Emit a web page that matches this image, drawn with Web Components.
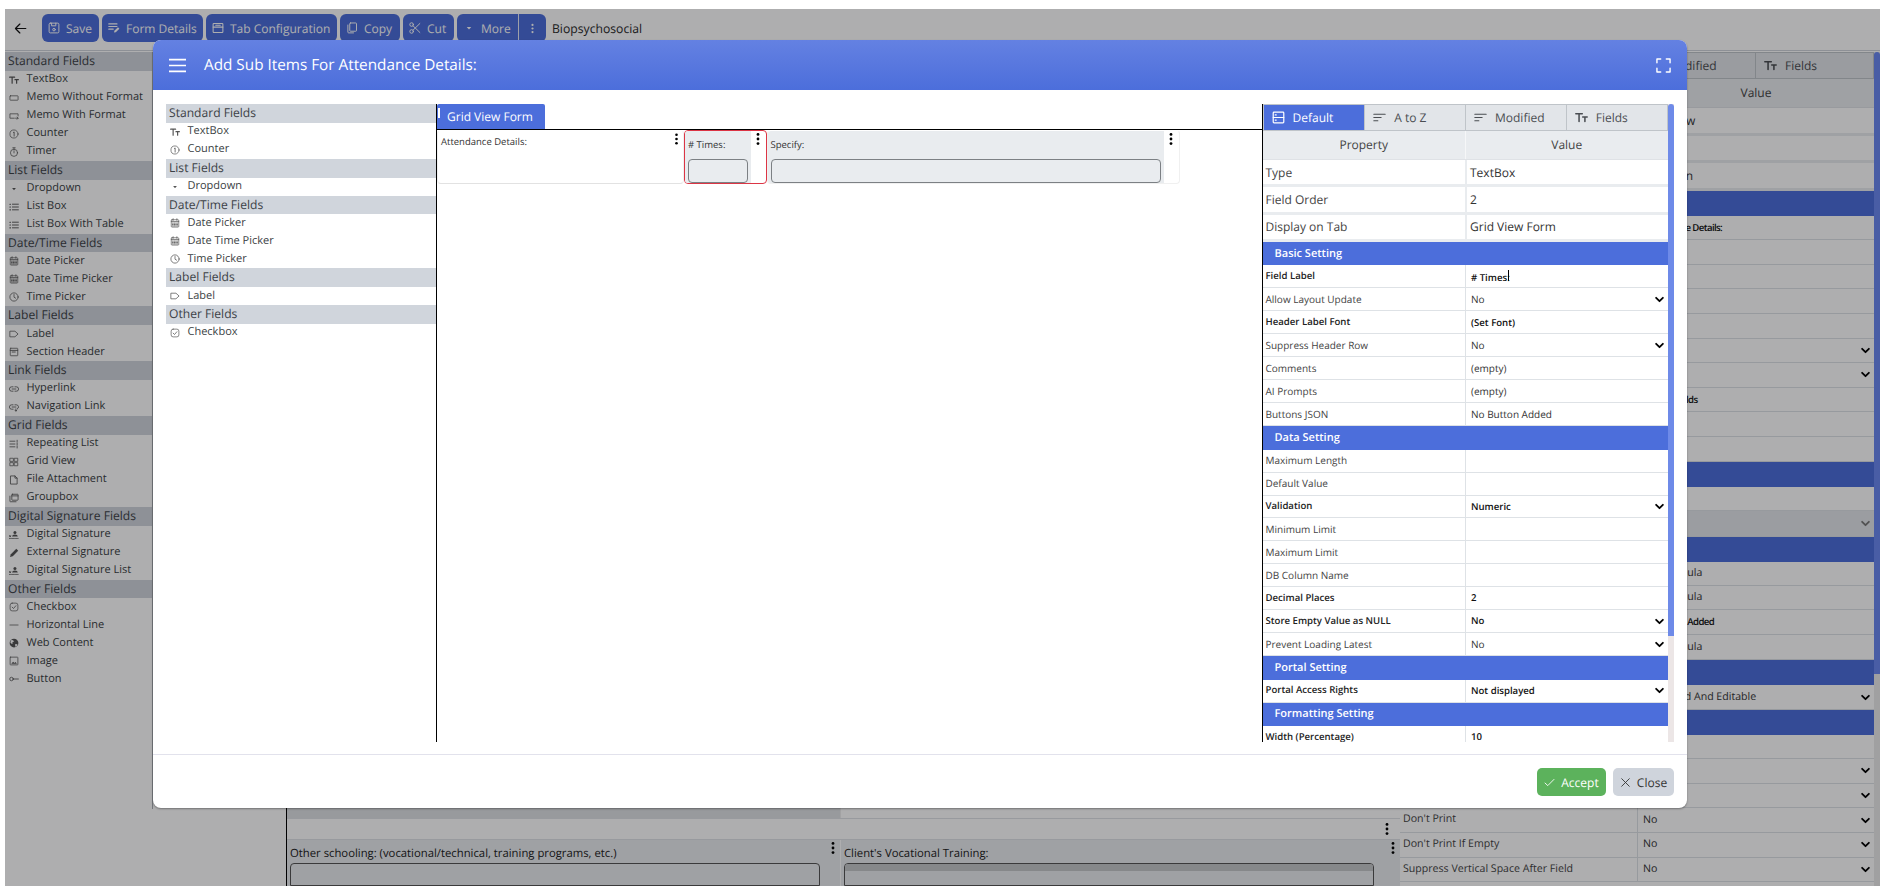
<!DOCTYPE html>
<html lang="en"><head><meta charset="utf-8"><title>Form Designer</title>
<style>
html,body{margin:0;padding:0;height:100%;overflow:hidden;background:#fff}
body{font-family:"Open Sans","Noto Sans",sans-serif;color:#333;text-rendering:geometricPrecision}
</style></head><body>
<app-shell>
  <tool-bar slot="toolbar" title-text="Biopsychosocial">
    <tool-btn icon="save" w="57">Save</tool-btn>
    <tool-btn icon="formdetails" w="101">Form Details</tool-btn>
    <tool-btn icon="tabconfig" w="131">Tab Configuration</tool-btn>
    <tool-btn icon="copy" w="60">Copy</tool-btn>
    <tool-btn icon="cut" w="51">Cut</tool-btn>
    <tool-btn icon="caret" w="89" split top>More</tool-btn>
  </tool-bar>
  <field-palette slot="side" style="--pal-w:147px;--pal-h:757px;--pal-border:1px solid #a8adb3">
    <field-group label="Standard Fields">
      <field-item icon="text">TextBox</field-item><field-item icon="memo">Memo Without Format</field-item><field-item icon="memofmt">Memo With Format</field-item><field-item icon="counter">Counter</field-item><field-item icon="timer">Timer</field-item>
    </field-group>
    <field-group label="List Fields">
      <field-item icon="caret">Dropdown</field-item><field-item icon="list">List Box</field-item><field-item icon="list">List Box With Table</field-item>
    </field-group>
    <field-group label="Date/Time Fields">
      <field-item icon="cal">Date Picker</field-item><field-item icon="cal">Date Time Picker</field-item><field-item icon="clock">Time Picker</field-item>
    </field-group>
    <field-group label="Label Fields">
      <field-item icon="label">Label</field-item><field-item icon="section">Section Header</field-item>
    </field-group>
    <field-group label="Link Fields">
      <field-item icon="link">Hyperlink</field-item><field-item icon="navlink">Navigation Link</field-item>
    </field-group>
    <field-group label="Grid Fields">
      <field-item icon="repeat">Repeating List</field-item><field-item icon="grid">Grid View</field-item><field-item icon="file">File Attachment</field-item><field-item icon="group">Groupbox</field-item>
    </field-group>
    <field-group label="Digital Signature Fields">
      <field-item icon="sign">Digital Signature</field-item><field-item icon="pen">External Signature</field-item><field-item icon="sign">Digital Signature List</field-item>
    </field-group>
    <field-group label="Other Fields">
      <field-item icon="check">Checkbox</field-item><field-item icon="hline">Horizontal Line</field-item><field-item icon="globe">Web Content</field-item><field-item icon="image">Image</field-item><field-item icon="button">Button</field-item>
    </field-group>
  </field-palette>
  <form-canvas slot="main"></form-canvas>
  <prop-grid slot="props" style="--pg-w:480px;--pg-h:835px;--thumb-h:622px;--track:#ebebeb;--thumb:#6b88f0;--tab-h:27px;--head-h:28px;--bar-w:6px;--row-fs:10.6px;--strong-ls:-.6px;--tab-pad:8px">
    <prop-row big label="Type" value="Grid View" h="27.5"></prop-row>
    <prop-row big label="Field Order" value="" h="27.5"></prop-row>
    <prop-row big label="Display on Tab" value="Question" h="27.5"></prop-row>
    <prop-band h="25">Basic Setting</prop-band>
    <prop-row strong label="Field Label" value="Attendance Details:" h="24.7"></prop-row>
    <prop-row label="Allow Layout Update" value="" h="24.6"></prop-row>
    <prop-row label="Header Label Font" value="" h="24.6"></prop-row>
    <prop-row label="Suppress Header Row" value="" h="24.6"></prop-row>
    <prop-row label="Comments" value="" h="24.6"></prop-row>
    <prop-row label="AI Prompts" value="" select h="24.6"></prop-row>
    <prop-row label="Buttons JSON" value="" select h="24.6"></prop-row>
    <prop-row strong label="Sub Items" value="No Sub Fields" h="24.6"></prop-row>
    <prop-row label="Field Note" value="" h="24.6"></prop-row>
    <prop-row label="Field Hint" value="" h="24.6"></prop-row>
    <prop-band h="25">Data Setting</prop-band>
    <prop-row label="Default Value" value="" h="24.6"></prop-row>
    <prop-row label="Validation" value="" h="25.5" select disabled></prop-row>
    <prop-band h="25">Calculation Setting</prop-band>
    <prop-row label="Show Formula" value="Set Formula" h="24.4"></prop-row>
    <prop-row label="Hide Formula" value="Set Formula" h="24.4"></prop-row>
    <prop-row strong label="Action Buttons" value="No Button Added" h="24.6"></prop-row>
    <prop-row label="Read Only Formula" value="Set Formula" h="25.4"></prop-row>
    <prop-band h="25">Portal Setting</prop-band>
    <prop-row label="Portal Access Rights" value="Displayed And Editable" select h="24.4"></prop-row>
    <prop-band h="25">Print Setting</prop-band>
    <prop-row label="Print Label" value="" h="24.4"></prop-row>
    <prop-row label="Print Style" value="" select h="24.6"></prop-row>
    <prop-row label="Page Break" value="" select h="24.6"></prop-row>
    <prop-row label="Don't Print" value="No" select h="24.6"></prop-row>
    <prop-row label="Don't Print If Empty" value="No" select h="24.6"></prop-row>
    <prop-row label="Suppress Vertical Space After Field" value="No" select h="24.6"></prop-row>
  </prop-grid>
  <sub-modal slot="overlay" heading="Add Sub Items For Attendance Details:">
    <field-palette slot="left" style="--pal-w:270px">
      <field-group label="Standard Fields"><field-item icon="text">TextBox</field-item><field-item icon="counter">Counter</field-item></field-group>
      <field-group label="List Fields"><field-item icon="caret">Dropdown</field-item></field-group>
      <field-group label="Date/Time Fields"><field-item icon="cal">Date Picker</field-item><field-item icon="cal">Date Time Picker</field-item><field-item icon="clock">Time Picker</field-item></field-group>
      <field-group label="Label Fields"><field-item icon="label">Label</field-item></field-group>
      <field-group label="Other Fields"><field-item icon="check">Checkbox</field-item></field-group>
    </field-palette>
    <tab-canvas slot="center" tab="Grid View Form">
      <form-card w="247" label="Attendance Details:" plain></form-card>
      <form-card w="82.5" label="# Times:" input selected bandw="66"></form-card>
      <form-card w="413" label="Specify:" input bandw="396"></form-card>
    </tab-canvas>
    <prop-grid slot="right" active style="--pg-w:412px;--pg-h:638px;--thumb-h:532px;--track:#ece6e6;--thumb:#6e8ae8;--tab-h:27px;--head-h:28px;--bar-w:6px;--line:1px solid #000">
      <prop-row big label="Type" value="TextBox"></prop-row>
      <prop-row big label="Field Order" value="2"></prop-row>
      <prop-row big label="Display on Tab" value="Grid View Form"></prop-row>
      <prop-band>Basic Setting</prop-band>
      <prop-row strong label="Field Label" value="# Times:" caret></prop-row>
      <prop-row label="Allow Layout Update" value="No" select></prop-row>
      <prop-row strong label="Header Label Font" value="(Set Font)"></prop-row>
      <prop-row label="Suppress Header Row" value="No" select></prop-row>
      <prop-row label="Comments" value="(empty)"></prop-row>
      <prop-row label="AI Prompts" value="(empty)"></prop-row>
      <prop-row label="Buttons JSON" value="No Button Added"></prop-row>
      <prop-band>Data Setting</prop-band>
      <prop-row label="Maximum Length" value=""></prop-row>
      <prop-row label="Default Value" value=""></prop-row>
      <prop-row strong label="Validation" value="Numeric" select></prop-row>
      <prop-row label="Minimum Limit" value=""></prop-row>
      <prop-row label="Maximum Limit" value=""></prop-row>
      <prop-row label="DB Column Name" value=""></prop-row>
      <prop-row strong label="Decimal Places" value="2"></prop-row>
      <prop-row strong label="Store Empty Value as NULL" value="No" select></prop-row>
      <prop-row label="Prevent Loading Latest" value="No" select></prop-row>
      <prop-band>Portal Setting</prop-band>
      <prop-row strong label="Portal Access Rights" value="Not displayed" select></prop-row>
      <prop-band>Formatting Setting</prop-band>
      <prop-row strong label="Width (Percentage)" value="10"></prop-row>
    </prop-grid>
    <modal-btn slot="footer" icon="ok" kind="ok" w="69">Accept</modal-btn>
    <modal-btn slot="footer" icon="x" kind="plain" w="61">Close</modal-btn>
  </sub-modal>
</app-shell>
<script>
const S='fill="none" stroke="currentColor" stroke-linecap="round" stroke-linejoin="round"';
const ICONS={
 text:`<path ${S} stroke-width="1.9" d="M1 3.5h8M5 3.5V13M9.5 7.5h5.5M12.2 7.5V13"/>`,
 memo:`<rect ${S} stroke-width="1.2" x="1.5" y="4.5" width="13" height="7" rx=".8"/>`,
 memofmt:`<path ${S} stroke-width="1.2" d="M14.5 8V4.5h-13v7h7"/><path ${S} stroke-width="1.2" d="M10.5 11.5h4M13 9.8l1.6 1.7-1.6 1.7"/>`,
 counter:`<circle ${S} stroke-width="1.1" cx="8" cy="8" r="6.5"/><path ${S} stroke-width="1.3" d="M7 5.5l1.2-.8v6.6"/>`,
 timer:`<circle ${S} stroke-width="1.2" cx="8" cy="9.3" r="5.7"/><path ${S} stroke-width="1.2" d="M6 1.3h4M8 1.3v2.2M8 6v3.5"/>`,
 caret:`<path fill="currentColor" d="M5 6.5h6L8 10z"/>`,
 list:`<path ${S} stroke-width="1.5" d="M5.5 3.5H15M5.5 8H15M5.5 12.5H15"/><path ${S} stroke-width="1.8" d="M1.4 3.5h1M1.4 8h1M1.4 12.5h1"/>`,
 cal:`<rect ${S} stroke-width="1.1" x="2" y="2.8" width="12" height="11.7" rx="1.2"/><path ${S} stroke-width="1.2" d="M5 1.2v2.4M11 1.2v2.4M2 5.7h12"/><path ${S} stroke-width="1.4" stroke-dasharray="1 1.6" stroke-linecap="butt" d="M4 8.2h8M4 10.4h8M4 12.6h8"/>`,
 clock:`<circle ${S} stroke-width="1.2" cx="8" cy="8" r="6.6"/><path ${S} stroke-width="1.2" d="M8 4v4.3l2.6 1.6"/>`,
 label:`<path ${S} stroke-width="1.2" d="M2 3.5h7.5L14.5 8l-5 4.5H2z"/>`,
 section:`<rect ${S} stroke-width="1.2" x="2" y="2" width="12" height="12" rx=".8"/><path ${S} stroke-width="1.4" d="M2 5.4h12M5 8h5"/>`,
 link:`<path ${S} stroke-width="1.3" d="M6.5 4.5H4.2a3.5 3.5 0 0 0 0 7h2.3M9.5 4.5h2.3a3.5 3.5 0 0 1 0 7H9.5M5 8h6"/>`,
 navlink:`<path ${S} stroke-width="1.3" d="M6.5 4.5H4.2a3.5 3.5 0 0 0 0 7h2.3M9.5 4.5h2.3a3.5 3.5 0 0 1 1.5 6.6M5 8h6M11 11v3.5M9.4 13l1.6 1.6 1.6-1.6"/>`,
 repeat:`<path ${S} stroke-width="1.3" d="M1.5 3.5h8M1.5 8h8M1.5 12.5h8M13 2v3M13 6.7v3M13 11.4v3"/>`,
 grid:`<rect ${S} stroke-width="1.2" x="2" y="2" width="5" height="5"/><rect ${S} stroke-width="1.2" x="9" y="2" width="5" height="5"/><rect ${S} stroke-width="1.2" x="2" y="9" width="5" height="5"/><rect ${S} stroke-width="1.2" x="9" y="9" width="5" height="5"/>`,
 file:`<path ${S} stroke-width="1.3" d="M3 1.5h6.5L13 5v9.5H3zM9.5 1.5V5H13"/>`,
 group:`<rect ${S} stroke-width="1.3" x="4.5" y="2" width="10" height="9.5" rx=".8"/><path ${S} stroke-width="1.3" d="M1.5 5v8.2a.8.8 0 0 0 .8.8h9"/><path ${S} stroke-width="1.3" d="M4.5 4.6h10"/>`,
 sign:`<circle cx="9.5" cy="4" r="2.4" fill="currentColor"/><path fill="currentColor" d="M5 10.5c0-2.3 2-3.4 4.5-3.4s4.5 1.1 4.5 3.4z"/><path ${S} stroke-width="1.2" stroke-dasharray="1 1.2" stroke-linecap="butt" d="M.5 13.5h15"/><path ${S} stroke-width="1.3" d="M.8 8.8l2 2M2.8 8.8l-2 2"/>`,
 pen:`<path fill="currentColor" d="M11.7 1.3l3 3L6 13l-4.5 1.5L3 10z"/>`,
 check:`<rect ${S} stroke-width="1.1" x="1.8" y="1.8" width="12.4" height="12.4" rx="3.2"/><path ${S} stroke-width="1.2" d="M5 8.2l2.2 2.2L11 6"/>`,
 hline:`<path ${S} stroke-width="1.2" d="M1.5 8h13"/>`,
 globe:`<circle cx="8" cy="8" r="7" fill="currentColor"/><path fill="#fff" d="M4 2.6l3 1.2.8 2.2-2.6 1 .6 2.6-1.8-.4L2 6.6zM10 9.4l3.6.4-1.2 3-2.6 1.2z"/>`,
 image:`<rect ${S} stroke-width="1.2" x="1.8" y="1.8" width="12.4" height="12.4" rx=".8"/><path fill="currentColor" d="M3.6 12.4l3-3.4 2 2 2-1.5 2 2.9z"/>`,
 button:`<circle ${S} stroke-width="1.3" cx="4" cy="8" r="2.8"/><path ${S} stroke-width="1.3" d="M7 8h8"/>`,
 save:`<rect ${S} stroke-width="1.3" x="1.5" y="1.5" width="13" height="13" rx="1.6"/><path ${S} stroke-width="1.3" d="M4.8 1.5v3.6h5.6V1.5"/><circle ${S} stroke-width="1.3" cx="8" cy="10.2" r="1.7"/>`,
 formdetails:`<path ${S} stroke-width="1.4" d="M1 2.5h11M1 6h11M1 9.5h6"/><path fill="currentColor" d="M13.3 7l1.9 1.9-4.8 4.6-2.4.6.5-2.4z"/>`,
 tabconfig:`<rect ${S} stroke-width="1.4" x="1.5" y="2" width="13" height="12" rx="1"/><path ${S} stroke-width="1.4" d="M1.5 6.8h13M5 4.4h6"/>`,
 copy:`<rect ${S} stroke-width="1.3" x="5" y="1.3" width="9" height="11" rx="1"/><path ${S} stroke-width="1.3" d="M2.5 4v9.5a1 1 0 0 0 1 1H10"/>`,
 cut:`<circle ${S} stroke-width="1.3" cx="3.5" cy="3.4" r="2.4"/><circle ${S} stroke-width="1.3" cx="3.5" cy="12.6" r="2.4"/><path ${S} stroke-width="1.3" d="M5.3 5l9.2 9M5.3 11l9.2-9"/>`,
 back:`<path ${S} stroke-width="1.5" d="M14.5 8H1.8M7.2 2.5L1.8 8l5.4 5.5"/>`,
 kebab:`<circle cx="8" cy="2.8" r="1.6" fill="currentColor"/><circle cx="8" cy="8" r="1.6" fill="currentColor"/><circle cx="8" cy="13.2" r="1.6" fill="currentColor"/>`,
 menu:`<path ${S} stroke-width="1.5" stroke-linecap="butt" d="M0 2.5h16M0 8h16M0 13.5h16"/>`,
 full:`<path ${S} stroke-width="1.5" stroke-linecap="butt" d="M1 5V1h4M11 1h4v4M1 11v4h4M15 11v4h-4"/>`,
 server:`<rect ${S} stroke-width="1.5" x="1.5" y="1.5" width="13" height="13" rx="1"/><path ${S} stroke-width="1.5" d="M1.5 8h13"/><path ${S} stroke-width="1.5" d="M4 4.8h1.2M4 11.2h1.2"/>`,
 sort:`<path ${S} stroke-width="1.3" stroke-linecap="butt" d="M1 4h14M1 8h9M1 12h5"/>`,
 ok:`<path ${S} stroke-width="1.3" d="M1.5 8.8l4 3.7L14.5 3.5"/>`,
 x:`<path ${S} stroke-width="1.3" d="M2.5 2.5l11 11M13.5 2.5l-11 11"/>`,
 chev:`<path ${S} stroke-width="3.2" stroke-linecap="butt" stroke-linejoin="miter" d="M2 5l6 6 6-6"/>`
};
function svg(n,w,h){return `<svg viewBox="0 0 16 16" width="${w}" height="${h||w}" aria-hidden="true">${ICONS[n]||''}</svg>`}
class Base extends HTMLElement{
  constructor(){super();this.attachShadow({mode:'open'})}
  connectedCallback(){this.render&&this.render()}
  a(n,d=''){return this.hasAttribute(n)?this.getAttribute(n):d}
}

customElements.define('app-shell',class extends Base{render(){this.shadowRoot.innerHTML=`<style>
:host{display:block;width:1875px;height:877px;margin:9px 5px 0;position:relative;overflow:hidden;background:#fff}
.wrap{display:flex;flex-direction:column;height:100%}
.row{flex:1;display:flex;min-height:0;align-items:flex-start}
.main{flex:1;min-width:0;display:flex;height:100%}
.dim{position:absolute;inset:0;background:rgba(3,3,6,.32)}
</style>
<div class="wrap"><slot name="toolbar"></slot>
<div class="row"><slot name="side"></slot><div class="main"><slot name="main"></slot></div><slot name="props"></slot></div></div>
<div class="dim"></div><slot name="overlay"></slot>`}});

customElements.define('tool-bar',class extends Base{render(){this.shadowRoot.innerHTML=`<style>
:host{display:flex;align-items:flex-start;height:36px;padding-top:5px;margin-bottom:1px;border-bottom:1px solid #ced3da;flex:none;gap:3px}
.back{width:34px;height:28px;display:flex;align-items:center;justify-content:center;color:#111;padding-right:4px;box-sizing:border-box}
.t{font-size:12.2px;color:#2a2a2a;line-height:30px;margin-left:3px}
</style><div class="back">${svg('back',13)}</div><slot></slot><span class="t">${this.a('title-text')}</span>`}});

customElements.define('tool-btn',class extends Base{render(){const split=this.hasAttribute('split');this.shadowRoot.innerHTML=`<style>
:host{display:flex;align-items:center;box-sizing:border-box;height:28px;width:${this.a('w')}px;padding-left:6px;background:#4c6edb;color:#fff;border-radius:6px;font-size:12px;white-space:nowrap;flex:none}
.i{display:flex;margin-right:6px}
:host([split]) .i{margin:0 6px 0 0;width:12px;justify-content:center}
.sp{margin-left:auto;display:flex;align-items:center;height:100%;border-left:1px solid #e8ebf7;width:27px;justify-content:center}
</style><span class="i">${svg(this.a('icon'),12)}</span><slot></slot>${split?`<span class="sp">${svg('kebab',11)}</span>`:''}`}});

customElements.define('field-palette',class extends Base{render(){this.shadowRoot.innerHTML=`<style>
:host{display:block;width:var(--pal-w);height:var(--pal-h,auto);flex:none;border-right:var(--pal-border,none)}
</style><slot></slot>`}});

customElements.define('field-group',class extends Base{render(){this.shadowRoot.innerHTML=`<style>
:host{display:block}
.h{height:18.8px;line-height:18px;background:#d0d5dc;font-size:12.1px;color:#3c4146;padding-left:3px;white-space:nowrap}
</style><div class="h">${this.a('label')}</div><slot></slot>`}});

customElements.define('field-item',class extends Base{render(){this.shadowRoot.innerHTML=`<style>
:host{display:flex;align-items:center;height:18px;padding-bottom:2px;box-sizing:border-box;font-size:11px;color:#3b3f44;white-space:nowrap}
.i{width:21.5px;padding-left:4px;box-sizing:border-box;display:flex;color:#555;flex:none;margin-top:2px}
</style><span class="i">${svg(this.a('icon'),10)}</span><slot></slot>`}});

customElements.define('prop-grid',class extends Base{render(){
 const tabs=[['server','Default'],['sort','A to Z'],['sort','Modified'],['text','Fields']];
 const act=this.hasAttribute('active');
 this.shadowRoot.innerHTML=`<style>
:host{display:flex;width:var(--pg-w);height:var(--pg-h);flex:none;overflow:hidden;box-sizing:border-box;border-left:var(--line,none);background:#fff}
.c{flex:1;min-width:0;display:flex;flex-direction:column}
.tabs{display:grid;grid-template-columns:repeat(4,1fr);height:var(--tab-h);flex:none;box-sizing:border-box;border:1px solid #bfc4c9;background:#d0d5dc}
.tab{display:flex;align-items:center;padding-left:var(--tab-pad,8px);gap:8px;font-size:12px;color:#4a4d52;border-left:1px solid #bfc4c9;background:#e2e5e9}
.tab:first-child{border-left:none}
.tab.on{background:#4c6edb;color:#fff}
.head{display:grid;grid-template-columns:1fr 1fr;height:var(--head-h);flex:none;background:#e9ecef;font-size:12px;color:#444;text-align:center;line-height:var(--head-h);border-bottom:1px solid #dfe2e6}
.head div+div{border-left:1px solid #f6f7f8}
.bar{width:var(--bar-w);flex:none;background:var(--track)}
.thumb{height:var(--thumb-h);background:var(--thumb);border-radius:3px 3px 0 0}
</style><div class="c"><div class="tabs">${tabs.map((t,i)=>`<div class="tab ${act&&i==0?'on':''}">${svg(t[0],13)}<span>${t[1]}</span></div>`).join('')}</div>
<div class="head"><div>Property</div><div>Value</div></div><slot></slot></div><div class="bar"><div class="thumb"></div></div>`}});

customElements.define('prop-row',class extends Base{render(){
 const big=this.hasAttribute('big'),strong=this.hasAttribute('strong'),sel=this.hasAttribute('select'),dis=this.hasAttribute('disabled');
 const h=this.a('h',big?'27.3':'22.95');
 this.shadowRoot.innerHTML=`<style>
:host{display:grid;grid-template-columns:1fr 1fr;height:${h}px;flex:none;box-sizing:border-box;border-bottom:${big?'3px solid #e9ecef':'1px solid #dee2e6'};font-size:${big?'12px':'var(--row-fs,10px)'};color:#3a3a3a;line-height:1;background:${dis?'#e3e6ea':'#fff'}}
div{display:flex;align-items:center;padding-left:3px;white-space:nowrap;overflow:hidden;min-width:0}
.l{font-weight:${strong?600:400};color:${strong?'#222':'#444'};font-size:${strong?'9.6px':'inherit'};padding-bottom:${big?'0':'1px'};padding-top:${big?'1px':'0'}}
.v{border-left:${big?'2px solid #e9ecef':'1px solid #dee2e6'};padding-left:${big?'3px':'5px'};font-weight:${strong?600:400};padding-top:${big?'1px':'0'};justify-content:space-between;padding-right:4px;color:${strong?'#111':'#333'};${strong?'font-size:9.6px;letter-spacing:var(--strong-ls,0);':''}${dis?'color:#666;':''}}
i{border-right:1px solid #000;height:11px;margin-left:-2px;display:inline-block}
svg{flex:none;color:${dis?'#777':'#000'}}
</style><div class="l">${this.a('label')}</div><div class="v"><span>${this.a('value')}${this.hasAttribute('caret')?'<i></i>':''}</span>${sel?svg('chev',9):''}</div>`}});

customElements.define('prop-band',class extends Base{render(){this.shadowRoot.innerHTML=`<style>
:host{display:flex;align-items:center;flex:none;height:${this.a('h','23.6')}px;background:#4c6edb;color:#fff;font-size:11px;font-weight:600;padding:0 0 1px 12px;box-sizing:border-box}
</style><slot></slot>`}});

customElements.define('sub-modal',class extends Base{render(){this.shadowRoot.innerHTML=`<style>
:host{position:absolute;left:148px;top:31px;width:1534px;height:768px;background:#fff;border-radius:8px;display:flex;flex-direction:column;overflow:hidden;box-shadow:0 1px 2px rgba(0,0,0,.35)}
.hd{height:50px;flex:none;display:flex;align-items:center;background:linear-gradient(#6481e2,#4c6edb);color:#fff;padding:0 16px;box-sizing:border-box}
.t{font-size:15.3px;font-weight:500;margin-left:18px;white-space:nowrap}
.sp{flex:1}
.bd{flex:1;min-height:0;display:flex;padding:14px 13px 12px 13px}
.ft{height:54px;flex:none;border-top:1px solid #e2e2ec;box-sizing:border-box;display:flex;justify-content:flex-end;gap:7px;padding:13px 13px 0 0}
</style><div class="hd">${svg('menu',17)}<span class="t">${this.a('heading')}</span><span class="sp"></span>${svg('full',15)}</div>
<div class="bd"><slot name="left"></slot><slot name="center"></slot><slot name="right"></slot></div>
<div class="ft"><slot name="footer"></slot></div>`}});

customElements.define('modal-btn',class extends Base{render(){const ok=this.a('kind')=='ok';this.shadowRoot.innerHTML=`<style>
:host{display:flex;align-items:center;justify-content:center;gap:6px;width:${this.a('w')}px;height:28px;box-sizing:border-box;border-radius:5px;background:${ok?'#5cb25c':'#cfd4dc'};color:${ok?'#fff':'#333'};font-size:12px}
</style>${svg(this.a('icon'),11)}<slot></slot>`}});

customElements.define('tab-canvas',class extends Base{render(){this.shadowRoot.innerHTML=`<style>
:host{display:flex;flex-direction:column;width:825.5px;flex:none;border-left:1px solid #000;box-sizing:border-box}
.bar{height:26px;flex:none;border-bottom:1px solid #000;box-sizing:border-box;display:flex}
.tab{width:108px;height:24.5px;background:#4c6edb;color:#fff;font-size:12px;display:flex;align-items:center;padding-left:10px;box-sizing:border-box;border-radius:2px 2px 0 0;position:relative;white-space:nowrap}
.tab::before{content:"";position:absolute;left:1px;top:4px;width:2px;height:10px;background:#fff}
.cards{display:flex;height:54px}
</style><div class="bar"><div class="tab">${this.a('tab')}</div></div><div class="cards"><slot></slot></div>`}});

customElements.define('form-card',class extends Base{render(){
 const plain=this.hasAttribute('plain'),sel=this.hasAttribute('selected');
 this.shadowRoot.innerHTML=`<style>
:host{display:flex;width:${this.a('w')}px;height:54px;flex:none;box-sizing:border-box;border:1px solid ${sel?'#dc3545':'#f0f0f0'};border-top-color:${sel?'#dc3545':'transparent'};border-radius:4px;overflow:hidden;background:#fff;${plain?'border-bottom-color:#e2e2e2;':''}}
.m{${plain?'flex:1;':'background:#e9ecef;width:'+this.a('bandw')+'px;'}padding:${plain?'5px 3px':'8px 3px 0'};box-sizing:border-box;display:flex;flex-direction:column;min-width:0}
.l{font-size:9.5px;color:#333;line-height:12px;white-space:nowrap}
.inp{margin-top:8px;height:27px;border:1px solid #7c8084;border-radius:4px;background:#e9ecef;box-sizing:border-box}
.k{flex:${plain?'none':'1'};display:flex;justify-content:center;padding-top:1px;color:#000;width:${plain?'13px':'auto'}}
</style><div class="m"><span class="l">${this.a('label')}</span>${this.hasAttribute('input')?'<div class="inp"></div>':''}</div><div class="k">${svg('kebab',14)}</div>`}});

customElements.define('form-canvas',class extends Base{render(){this.shadowRoot.innerHTML=`<style>
:host{display:flex;flex-direction:column;justify-content:flex-end;flex:1;box-sizing:border-box;margin-left:133px;border-left:1px solid #000;min-width:0;overflow:hidden;height:100%}
.r1{display:flex;height:12px;flex:none}
.r1 .a{width:553px;background:#dfe2e5;border-right:1px solid #eee}
.r2{height:20px;flex:none;border:1px solid #dfe2e6;border-width:1px 0;display:flex;justify-content:flex-end;align-items:center;color:#000;padding-right:6px}
.r3{height:46px;flex:none;display:flex;gap:1px}
.cell{flex:1;background:#e9ecef;display:flex;flex-direction:column;padding:7px 2px 0 3px;box-sizing:border-box;position:relative;font-size:11.3px;color:#222;min-width:0}
.cell:first-child{flex:none;width:553px}
.cell .k{position:absolute;right:0;top:1px;color:#000}
.cell span{line-height:13px;white-space:nowrap}
.box{height:28px;margin-top:3px;border:1px solid #555;border-radius:4px 4px 0 0;width:530px;box-sizing:border-box}
.hb{height:7px;background:#c5c7c9;border-radius:3px 3px 0 0}
</style>
<div class="r1"><div class="a"></div></div>
<div class="r2">${svg('kebab',14)}</div>
<div class="r3"><div class="cell"><span>Other schooling: (vocational/technical, training programs, etc.)</span><div class="box"></div><span class="k">${svg('kebab',14)}</span></div>
<div class="cell"><span>Client's Vocational Training:</span><div class="box"><div class="hb"></div></div><span class="k">${svg('kebab',14)}</span></div></div>`}});
</script>
</body></html>
